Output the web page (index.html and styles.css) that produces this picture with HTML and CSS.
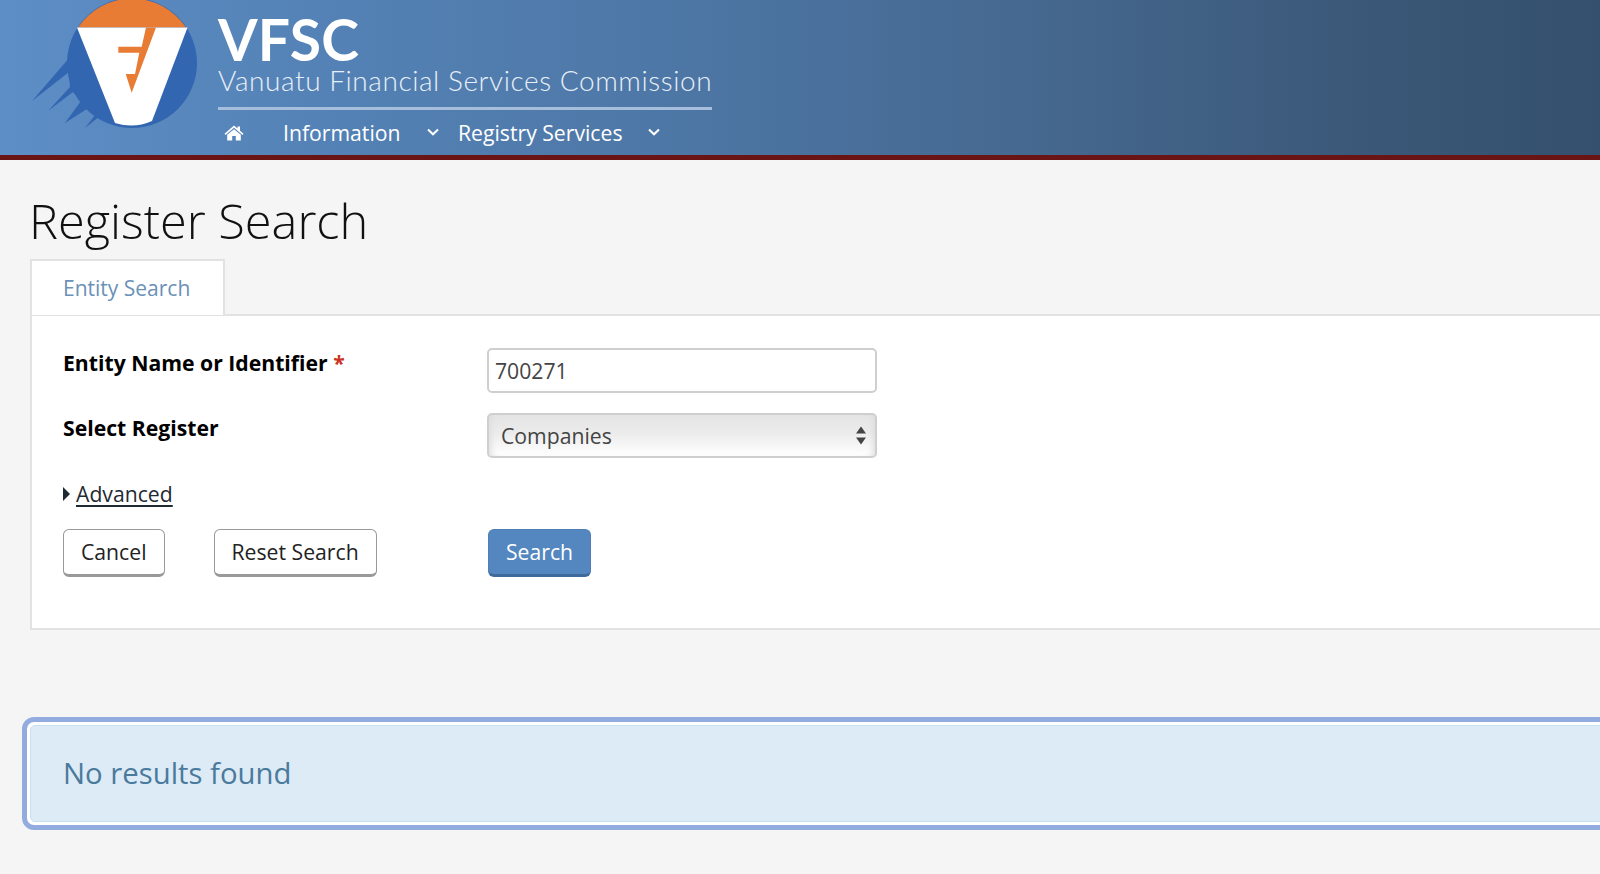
FILE: index.html
```html
<!DOCTYPE html>
<html lang="en">
<head>
<meta charset="utf-8">
<title>Register Search</title>
<link rel="stylesheet" href="styles.css">
</head>
<body>
<header class="site-header">
  <svg class="logo" viewBox="0 0 218 155" aria-hidden="true">
    <circle cx="132" cy="63" r="65" fill="#3366b0"/>
    <path d="M78 27.5A65 65 0 0 1 186 27.5Z" fill="#e97c35"/>
    <path d="M72 44L70 57L32 101L69 72L70 87L48 111L73 92L81 101L65 123L90 107L95 115L85 128L100 116L110 100Z" fill="#3366b0"/>
    <path d="M77 27.5H187.500L152 121Q134 129 115 123Z" fill="#fff"/>
    <path d="M146 27.500H156L131.700 92.700L125.700 74H135L139.300 52.700H118.300V46.700H141.700Z" fill="#e97c35"/>
  </svg>
  <div class="brand">
    <div class="brand-name">VFSC</div>
    <div class="brand-sub">Vanuatu Financial Services Commission</div>
    <nav class="nav">
      <a class="nav-home" href="#" aria-label="Home">
        <svg viewBox="0 0 20 17" class="home-icon"><path d="M10 1.500L13.500 4.500V2.500H16V6.700L19.500 9.800L18.500 10.900L10 3.800L1.500 10.900L.5 9.800Z"/><path d="M10 5.200L16.800 10.800V16.500H11.800V12H8.200V16.500H3.200V10.800Z"/></svg>
      </a>
      <a class="nav-item nav-info" href="#">Information</a>
      <svg class="chev chev-info" viewBox="0 0 12 8"><path d="M1 1.500L6 6.300L11 1.500"/></svg>
      <a class="nav-item nav-reg" href="#">Registry Services</a>
      <svg class="chev chev-reg" viewBox="0 0 12 8"><path d="M1 1.500L6 6.300L11 1.500"/></svg>
    </nav>
  </div>
</header>
<main class="main">
  <h1 class="title">Register Search</h1>
  <div class="tab">Entity Search</div>
  <section class="panel">
    <form class="form">
      <label class="label" for="q">Entity Name or Identifier <span class="req">*</span></label>
      <input class="input" id="q" type="text" value="700271">
      <label class="label" for="reg">Select Register</label>
      <div class="select-wrap">
        <select class="select" id="reg"><option>Companies</option></select>
        <svg class="select-arrows" viewBox="0 0 10 18"><path d="M5 0L10 7H0Z"/><path d="M5 18L0 11H10Z"/></svg>
      </div>
      <div class="advanced"><span class="caret"></span><a href="#">Advanced</a></div>
      <div class="left-actions">
        <button class="btn" type="button">Cancel</button>
        <button class="btn" type="button">Reset Search</button>
      </div>
      <div class="right-actions">
        <button class="btn btn-primary" type="button">Search</button>
      </div>
    </form>
  </section>
  <div class="alert-ring"><div class="alert">No results found</div></div>
</main>
</body>
</html>
```
FILE: styles.css
```css
html, body { margin: 0; padding: 0; height: 100%; overflow: hidden; }
body { background: #f5f5f5; font-family: "Open Sans", sans-serif; color: #000; }
.site-header {
  display: flex; height: 155px; border-bottom: 5px solid #6b1416; box-sizing: content-box;
  background: linear-gradient(90deg, #5d8ec6 0%, #5482b6 20%, #4c75a3 45%, #45688f 65%, #3b5878 85%, #34506e 100%);
  overflow: hidden;
}
.logo { width: 218px; height: 155px; flex: none; }
.brand { width: 494px; display: flex; flex-direction: column; color: #fff; }
.brand-name {
  font-family: Lato, sans-serif; font-weight: 700; font-size: 57px; line-height: 40px;
  margin-top: 19px; letter-spacing: .2px; height: 41px;
}
.brand-sub {
  font-family: Lato, sans-serif; font-weight: 300; font-size: 28px; line-height: 30px;
  margin-top: 5px; color: #e8eff7; white-space: nowrap; padding-bottom: 12px; border-bottom: 3px solid #a6bedb;
  letter-spacing: .57px;
}
.nav { display: flex; align-items: center; height: 44px; white-space: nowrap; }
.nav a { color: #fff; text-decoration: none; }
.nav-home { display: flex; width: 65px; padding-left: 6px; box-sizing: border-box; }
.home-icon { width: 20px; height: 17px; fill: #fff; }
.nav-item { font-size: 21.200px; }
.nav-info { width: 144px; }
.nav-reg { width: 190px; }
.chev { width: 12px; height: 8px; fill: none; stroke: #fff; stroke-width: 2; margin-top: 0; }
.chev-info { margin-right: 19px; }
.main { padding-left: 30px; width: 1700px; }
.title { margin: 0 0 0 -1px; font-weight: 300; font-size: 48.700px; line-height: 66px; padding-top: 27px; height: 72px; color: #111; }
.tab {
  width: 195px; height: 56px; box-sizing: border-box; background: #fff; border: 2px solid #e2e2e2; border-bottom: 0;
  padding: 13px 0 0 31px; font-size: 21px; line-height: 28px; color: #6a91b8; position: relative; z-index: 1; margin-bottom: -1px;
}
.panel { background: #fff; border: 2px solid #e2e2e2; box-sizing: border-box; height: 316px; padding: 32px 0 0 31px; }
.form { display: grid; grid-template-columns: 424px 390px; grid-template-rows: 45px 45px 31px 48px; row-gap: 20px; }
.label { font-weight: 700; font-size: 21.200px; line-height: 30px; color: #000; }
.req { color: #cc3322; }
.input, .select {
  box-sizing: border-box; width: 100%; height: 45px; margin: 0; border: 2px solid #cfcfcf; border-radius: 5px;
  font: 21.200px "Open Sans", sans-serif; color: #444;
}
.input { background: #fff; padding: 0 6px; }
.select-wrap { position: relative; }
.select {
  appearance: none; -webkit-appearance: none; padding: 0 12px;
  background: linear-gradient(180deg, #e4e4e4 0%, #ececec 45%, #fff 100%);
  box-shadow: inset 6px 0 6px -4px #ddd, inset -6px 0 6px -4px #ddd;
}
.select-arrows { position: absolute; right: 11px; top: 13px; width: 10px; height: 19px; fill: #444; }
.advanced { grid-column: 1 / -1; font-size: 21.200px; line-height: 30px; display: flex; align-items: center; }
.advanced a { color: #1f2a33; text-decoration: underline; text-underline-offset: 3px; }
.caret { width: 0; height: 0; border-left: 7px solid #1f2a33; border-top: 7px solid transparent; border-bottom: 7px solid transparent; margin-right: 6px; }
.left-actions { display: flex; gap: 49px; }
.right-actions { padding-left: 1px; }
.btn {
  height: 48px; box-sizing: border-box; padding: 0 17px; background: #fff; border: 1.500px solid #999; border-bottom: 3px solid #999;
  border-radius: 6px; font: 21.200px "Open Sans", sans-serif; color: #222; line-height: 1;
}
.btn-primary { background: #5487c0; color: #fff; border: 1px solid #4f7fb4; border-bottom: 3px solid #3e6a9b; }
.alert-ring {
  margin: 87px 0 0 -8px; height: 113px; box-sizing: border-box; border: 5px solid #92ace0; border-radius: 12px; background: #fff; padding: 3px;
}
.alert {
  height: 100%; box-sizing: border-box; background: #ddebf7; border: 1px solid #c9e0ee; border-radius: 5px;
  padding: 0 0 0 32px; font-size: 29.300px; line-height: 95px; color: #4a7a9c;
}
```
